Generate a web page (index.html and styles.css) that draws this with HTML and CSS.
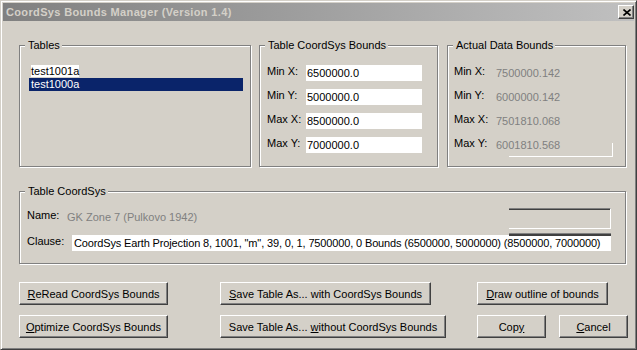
FILE: index.html
```html
<!DOCTYPE html>
<html lang="en">
<head>
    <meta charset="UTF-8">
    <title>CoordSys Bounds Manager</title>
    <link rel="stylesheet" href="styles.css">
</head>
<body>

    <div class="window">
        <div class="titlebar">
            <span class="title">CoordSys Bounds Manager (Version 1.4)</span>
            <button class="close">
                <svg width="8" height="7" viewBox="0 0 8 7"><path d="M0.5 0.5 L7.5 6.5 M7.5 0.5 L0.5 6.5" stroke="#000" stroke-width="1.6" fill="none"/></svg>
            </button>
        </div>

        <div class="content">
            <div class="top-row">
                <fieldset class="group tables">
                    <legend>Tables</legend>
                    <ul class="list">
                        <li><span>test1001a</span></li>
                        <li class="selected">test1000a</li>
                    </ul>
                </fieldset>

                <fieldset class="group bounds">
                    <legend>Table CoordSys Bounds</legend>
                    <div class="group-body">
                        <div class="row"><label>Min X:</label><div class="edit">6500000.0</div></div>
                        <div class="row"><label>Min Y:</label><div class="edit">5000000.0</div></div>
                        <div class="row"><label>Max X:</label><div class="edit">8500000.0</div></div>
                        <div class="row"><label>Max Y:</label><div class="edit">7000000.0</div></div>
                    </div>
                </fieldset>

                <fieldset class="group actual">
                    <legend>Actual Data Bounds</legend>
                    <div class="group-body">
                        <div class="row"><label>Min X:</label><div class="value">7500000.142</div></div>
                        <div class="row"><label>Min Y:</label><div class="value">6000000.142</div></div>
                        <div class="row"><label>Max X:</label><div class="value">7501810.068</div></div>
                        <div class="row"><label>Max Y:</label><div class="value last">6001810.568</div></div>
                    </div>
                </fieldset>
            </div>

            <fieldset class="group coordsys">
                <legend>Table CoordSys</legend>
                <div class="group-body">
                    <div class="cs-row">
                        <label class="name-label">Name:</label>
                        <div class="value">GK Zone 7 (Pulkovo 1942)</div>
                        <div class="name-box"></div>
                    </div>
                    <div class="cs-row clause-row">
                        <label class="clause-label">Clause:</label>
                        <div class="clause">CoordSys Earth Projection 8, 1001, "m", 39, 0, 1, 7500000, 0 Bounds (6500000, 5000000) (8500000, 7000000)</div>
                    </div>
                </div>
            </fieldset>

            <div class="buttons">
                <button class="btn w1"><u>R</u>eRead CoordSys Bounds</button>
                <button class="btn w2"><u>S</u>ave Table As... with CoordSys Bounds</button>
                <button class="btn w3"><u>D</u>raw outline of bounds</button>

                <button class="btn w1"><u>O</u>ptimize CoordSys Bounds</button>
                <button class="btn w4">Save Table As... <u>w</u>ithout CoordSys Bounds</button>
                <div class="pair">
                    <button class="btn small">Cop<u>y</u></button>
                    <button class="btn small"><u>C</u>ancel</button>
                </div>
            </div>
        </div>
    </div>

</body>
</html>
```

FILE: styles.css
```css
* {
    box-sizing: border-box;
}
body {
    margin: 0;
    font-family: "Liberation Sans", Arial, sans-serif;
    font-size: 11px;
    background-color: #d4d0c8;
}
.window {
    width: 637px;
    height: 350px;
    padding: 2px;
    background-color: #d4d0c8;
    border: 1px solid;
    border-color: #d4d0c8 #404040 #404040 #d4d0c8;
    box-shadow: inset 1px 1px 0 #fff, inset -1px -1px 0 #808080;
}
.titlebar {
    height: 18px;
    display: flex;
    align-items: center;
    padding-left: 3px;
    background: linear-gradient(to right, #808080, #c0c0c0);
}
.title {
    color: #d4d0c8;
    font-weight: bold;
    letter-spacing: 0.35px;
    line-height: 18px;
}
.close {
    margin-left: auto;
    width: 16px;
    height: 14px;
    padding: 0;
    display: flex;
    align-items: center;
    justify-content: center;
    background-color: #d4d0c8;
    border: 1px solid;
    border-color: #fff #404040 #404040 #fff;
    box-shadow: inset -1px -1px 0 #808080;
}
.close svg {
    display: block;
    margin-left: 1px;
}
.content {
    padding: 18px 0 0 16px;
}
.top-row {
    display: flex;
}
.group {
    margin: 0;
    padding: 0;
    min-width: 0;
    border: 1px solid #808080;
    box-shadow: 1px 1px 0 #fff, inset 1px 1px 0 #fff;
}
.group legend {
    margin-left: 5px;
    padding: 0 2px 0 3px;
    line-height: 13px;
    background-color: #d4d0c8;
}
.tables {
    width: 232px;
    height: 128px;
}
.bounds {
    width: 179px;
    height: 128px;
    margin-left: 8px;
}
.bounds .group-body {
    padding: 13px 0 0 7px;
}
.actual {
    width: 179px;
    height: 128px;
    margin-left: 9px;
}
.actual .group-body {
    padding: 13px 0 0 6px;
}
.list {
    list-style: none;
    margin: 13px 0 0 9px;
    padding: 0;
    width: 214px;
}
.list li {
    line-height: 13px;
    height: 13px;
    padding-left: 2px;
}
.list li span {
    background-color: #fff;
}
.list li.selected {
    background-color: #0a246a;
    color: #fff;
}
.row {
    display: flex;
    align-items: flex-start;
    height: 16px;
    margin-bottom: 8px;
}
.row label {
    line-height: 12px;
}
.bounds .row label {
    width: 39px;
}
.actual .row label {
    width: 42px;
}
.edit {
    width: 116px;
    height: 16px;
    line-height: 16px;
    padding-left: 1px;
    background-color: #fff;
}
.value {
    color: #808080;
    line-height: 16px;
}
.value.last {
    position: relative;
    width: 116px;
}
.value.last::after {
    content: "";
    position: absolute;
    left: 13px;
    top: 6px;
    width: 103px;
    height: 13px;
    border-right: 1px solid #fff;
    border-bottom: 1px solid #fff;
}
.coordsys {
    width: 607px;
    height: 79px;
    margin-top: 18px;
}
.coordsys .group-body {
    padding: 11px 0 0 7px;
}
.cs-row {
    display: flex;
    align-items: flex-start;
    height: 16px;
}
.cs-row label {
    line-height: 12px;
}
.name-label {
    width: 40px;
}
.clause-label {
    width: 45px;
}
.name-box {
    margin: -1px 14px 0 auto;
    width: 102px;
    height: 21px;
    border-top: 1px solid #808080;
    border-right: 1px solid #fff;
    border-bottom: 1px solid #fff;
    box-shadow: inset 0 1px 0 #404040;
}
.clause-row {
    margin-top: 10px;
}
.clause {
    position: relative;
    width: 539px;
    height: 16px;
    line-height: 16px;
    padding-left: 2px;
    white-space: nowrap;
    letter-spacing: -0.14px;
    background-color: #fff;
}
.clause::before {
    content: "";
    position: absolute;
    right: 0;
    top: -2px;
    width: 102px;
    height: 2px;
    border-top: 1px solid #808080;
    background-color: #404040;
}
.buttons {
    display: grid;
    grid-template-columns: 201px 257px auto;
    grid-auto-rows: 23px;
    row-gap: 10px;
    margin-top: 18px;
}
.btn {
    height: 23px;
    padding: 0;
    font-family: "Liberation Sans", Arial, sans-serif;
    font-size: 11px;
    color: #000;
    background-color: #d4d0c8;
    border: 1px solid;
    border-color: #fff #404040 #404040 #fff;
    box-shadow: inset -1px -1px 0 #808080;
}
.w1 {
    width: 149px;
}
.w2 {
    width: 211px;
}
.w3 {
    width: 131px;
}
.w4 {
    width: 226px;
}
.pair {
    display: flex;
    gap: 13px;
}
.small {
    width: 69px;
}
```
